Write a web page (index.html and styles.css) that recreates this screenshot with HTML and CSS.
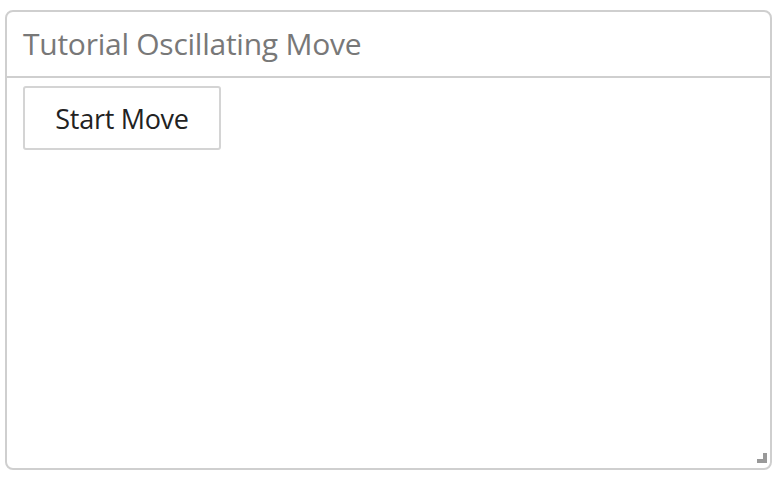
FILE: index.html
```html
<!DOCTYPE html>
<html>
<head>
<meta charset="utf-8">
<link rel="stylesheet" href="styles.css">
</head>
<body>
<div class="panel">
  <div class="panel-header">Tutorial Oscillating Move</div>
  <div class="panel-body">
    <button class="btn">Start Move</button>
  </div>
  <div class="grip"></div>
</div>
</body>
</html>
```
FILE: styles.css
```css
html, body {
  margin: 0;
  padding: 0;
  background: #fff;
}
body {
  padding: 10px 10px 0 5px;
  font-family: "Open Sans", "Noto Sans", sans-serif;
}
.panel {
  position: relative;
  box-sizing: border-box;
  width: 767px;
  height: 460px;
  border: 2px solid #cfcfcf;
  border-radius: 8px;
  display: flex;
  flex-direction: column;
}
.panel-header {
  height: 66px;
  box-sizing: border-box;
  border-bottom: 2px solid #cfcfcf;
  padding-left: 16px;
  padding-bottom: 1px;
  display: flex;
  align-items: center;
  font-size: 30px;
  color: #787878;
  letter-spacing: -0.25px;
}
.panel-body {
  padding: 8px 16px;
}
.btn {
  width: 198px;
  height: 64px;
  box-sizing: border-box;
  background: #fff;
  border: 2px solid #d4d4d4;
  border-radius: 3px;
  font-family: inherit;
  font-size: 27px;
  color: #222;
  letter-spacing: -0.3px;
  padding: 0;
}
.grip {
  position: absolute;
  right: 3px;
  bottom: 5px;
  width: 10px;
  height: 10px;
  background:
    linear-gradient(#999, #999) right top / 4px 10px no-repeat,
    linear-gradient(#999, #999) left bottom / 10px 4px no-repeat;
}
```
